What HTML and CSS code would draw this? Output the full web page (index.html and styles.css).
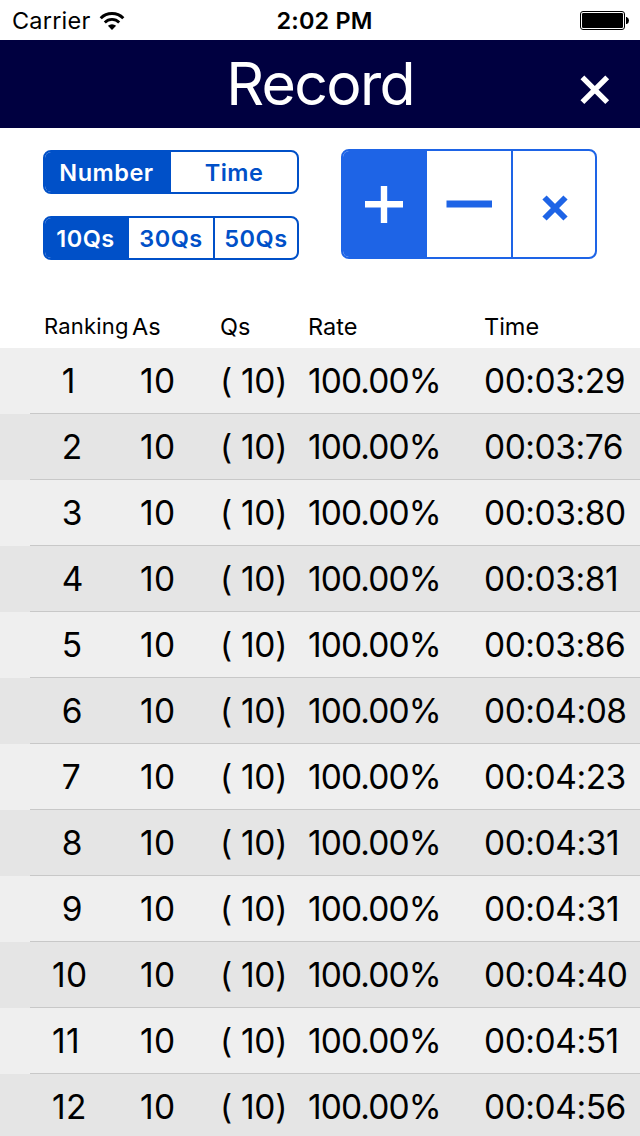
FILE: index.html
```html
<!DOCTYPE html>
<html lang="en">
<head>
    <meta charset="UTF-8">
    <meta name="viewport" content="width=device-width, initial-scale=1.0">
    <title>Record</title>
    <link rel="stylesheet" href="styles.css">
</head>
<body>

    <div class="status-bar">
        <div class="status-left">
            <span class="carrier">Carrier</span>
            <svg class="wifi" width="26" height="20" viewBox="0 0 26 20">
                <path d="M1.7 7.2 A16 16 0 0 1 24.3 7.2" fill="none" stroke="#000" stroke-width="3"/>
                <path d="M5.8 11.4 A10.2 10.2 0 0 1 20.2 11.4" fill="none" stroke="#000" stroke-width="2.8"/>
                <path d="M13 19 L8.9 14.8 A6 6 0 0 1 17.1 14.8 Z"/>
            </svg>
        </div>
        <span class="clock">2:02 PM</span>
        <svg class="battery" width="50" height="20" viewBox="0 0 50 20">
            <rect x="0.5" y="0.5" width="44" height="18" rx="2.5" fill="#fff" stroke="#000"/>
            <rect x="2" y="2" width="41" height="15" rx="1.2"/>
            <path d="M46 6 h0.8 q2.2 1 2.2 3.5 t-2.2 3.5 h-0.8 Z"/>
        </svg>
    </div>

    <header>
        <h1>Record</h1>
        <button class="close-btn" aria-label="Close">
            <svg width="30" height="30" viewBox="0 0 30 30">
                <path d="M2.4 2.4 L27.2 27.2 M27.2 2.4 L2.4 27.2" stroke="#fff" stroke-width="5.4"/>
            </svg>
        </button>
    </header>

    <div class="filters">
        <div class="filter-column">
            <div class="segments">
                <button class="selected">Number</button>
                <button>Time</button>
            </div>
            <div class="segments thirds">
                <button class="selected">10Qs</button>
                <button>30Qs</button>
                <button>50Qs</button>
            </div>
        </div>
        <div class="segments operators">
            <button class="selected" aria-label="Addition">
                <svg width="38" height="37" viewBox="0 0 38 37">
                    <path d="M0 18.3 H38 M19 0 V37" stroke="#fff" stroke-width="6.4"/>
                </svg>
            </button>
            <button aria-label="Subtraction">
                <svg width="46" height="37" viewBox="0 0 46 37">
                    <path d="M0.5 18 H46" stroke="#1e64e6" stroke-width="7"/>
                </svg>
            </button>
            <button aria-label="Multiplication">
                <svg class="times" width="26" height="26" viewBox="0 0 26 26">
                    <path d="M2.5 2.5 L23.5 23.5 M23.5 2.5 L2.5 23.5" stroke="#1e64e6" stroke-width="6"/>
                </svg>
            </button>
        </div>
    </div>

    <div class="record head">
        <span class="ranking">Ranking</span><span>As</span><span>Qs</span><span>Rate</span><span>Time</span>
    </div>

    <div class="records">
        <div class="record"><span class="rank">&nbsp;1</span><span class="answers">10</span><span class="questions">( 10)</span><span class="rate">100.00%</span><span class="time">00:03:29</span></div>
        <div class="record"><span class="rank">&nbsp;2</span><span class="answers">10</span><span class="questions">( 10)</span><span class="rate">100.00%</span><span class="time">00:03:76</span></div>
        <div class="record"><span class="rank">&nbsp;3</span><span class="answers">10</span><span class="questions">( 10)</span><span class="rate">100.00%</span><span class="time">00:03:80</span></div>
        <div class="record"><span class="rank">&nbsp;4</span><span class="answers">10</span><span class="questions">( 10)</span><span class="rate">100.00%</span><span class="time">00:03:81</span></div>
        <div class="record"><span class="rank">&nbsp;5</span><span class="answers">10</span><span class="questions">( 10)</span><span class="rate">100.00%</span><span class="time">00:03:86</span></div>
        <div class="record"><span class="rank">&nbsp;6</span><span class="answers">10</span><span class="questions">( 10)</span><span class="rate">100.00%</span><span class="time">00:04:08</span></div>
        <div class="record"><span class="rank">&nbsp;7</span><span class="answers">10</span><span class="questions">( 10)</span><span class="rate">100.00%</span><span class="time">00:04:23</span></div>
        <div class="record"><span class="rank">&nbsp;8</span><span class="answers">10</span><span class="questions">( 10)</span><span class="rate">100.00%</span><span class="time">00:04:31</span></div>
        <div class="record"><span class="rank">&nbsp;9</span><span class="answers">10</span><span class="questions">( 10)</span><span class="rate">100.00%</span><span class="time">00:04:31</span></div>
        <div class="record"><span class="rank">10</span><span class="answers">10</span><span class="questions">( 10)</span><span class="rate">100.00%</span><span class="time">00:04:40</span></div>
        <div class="record"><span class="rank">11</span><span class="answers">10</span><span class="questions">( 10)</span><span class="rate">100.00%</span><span class="time">00:04:51</span></div>
        <div class="record"><span class="rank">12</span><span class="answers">10</span><span class="questions">( 10)</span><span class="rate">100.00%</span><span class="time">00:04:56</span></div>
    </div>

</body>
</html>
```

FILE: styles.css
```css
* {
    box-sizing: border-box;
}

body {
    font-family: Inter, "Liberation Sans", sans-serif;
    background-color: #fff;
    color: #000;
    margin: 0;
    height: 1136px;
    overflow: hidden;
}

button {
    font-family: inherit;
    border: none;
    padding: 0;
    background: none;
    cursor: pointer;
}

svg {
    display: block;
}

/* Status bar */
.status-bar {
    display: grid;
    grid-template-columns: 1fr auto 1fr;
    height: 40px;
    padding: 1px 10px 0 12px;
    align-items: center;
    font-size: 23.5px;
    line-height: 40px;
}

.status-left {
    display: flex;
    align-items: center;
    gap: 9px;
}

.carrier {
    letter-spacing: 0.2px;
}

.clock {
    padding-left: 7px;
    font-weight: 600;
    letter-spacing: 0.15px;
}

.battery {
    justify-self: end;
}

/* Title bar */
header {
    display: grid;
    grid-template-columns: 1fr auto 1fr;
    align-items: center;
    height: 88px;
    padding: 0 30px;
    background-color: #000040;
    color: #fff;
}

h1 {
    grid-column: 2;
    margin: 0;
    font-size: 59px;
    font-weight: 400;
    line-height: 88px;
    letter-spacing: -1.7px;
}

.close-btn {
    justify-self: end;
    margin-top: 11px;
}

/* Segmented controls */
.filters {
    display: flex;
    gap: 42px;
    height: 178px;
    padding: 21px 43px 0;
}

.filter-column {
    display: flex;
    flex-direction: column;
    gap: 22px;
    width: 256px;
    padding-top: 1px;
}

.segments {
    display: grid;
    grid-template-columns: 126px 1fr;
    height: 44px;
    border: 2px solid #0050c8;
    border-radius: 8px;
    overflow: hidden;
}

.segments button {
    color: #0050c8;
    font-size: 23.5px;
    font-weight: 600;
    letter-spacing: 0.5px;
}

.segments .selected {
    padding-right: 3px;
    background-color: #0050c8;
    color: #fff;
}

.segments.thirds {
    grid-template-columns: 84px 84px 1fr;
}

.thirds button:last-child,
.operators button:last-child {
    border-left: 2px solid #0050c8;
}

.segments.operators {
    grid-template-columns: 84px 84px 1fr;
    width: 256px;
    height: 110px;
    border-color: #1e64e6;
}

.operators button {
    display: flex;
    align-items: center;
    justify-content: center;
}

.operators .selected {
    background-color: #1e64e6;
}

.operators button:last-child {
    border-color: #1e64e6;
}

.times {
    margin: 8px 0 0 1px;
}

/* Record list */
.record {
    display: grid;
    grid-template-columns: 88px 88px 88px 176px 1fr;
    height: 66px;
    padding-left: 44px;
    font-size: 33.5px;
    line-height: 67px;
    white-space: pre;
    background: linear-gradient(#c8c8c8, #c8c8c8) 30px 65px / 610px 1px no-repeat #efefef;
}

.records .record:nth-child(even) {
    background-color: #e5e5e5;
}

.record.head {
    height: 42px;
    font-size: 23.5px;
    line-height: 41px;
    background: none;
}

.ranking {
    font-size: 22px;
    letter-spacing: 0.2px;
}

.rank,
.answers {
    padding-left: 8px;
    letter-spacing: 0.3px;
}

.questions {
    letter-spacing: -0.3px;
}

.rate {
    letter-spacing: -0.9px;
}

.time {
    letter-spacing: -0.45px;
}
```
